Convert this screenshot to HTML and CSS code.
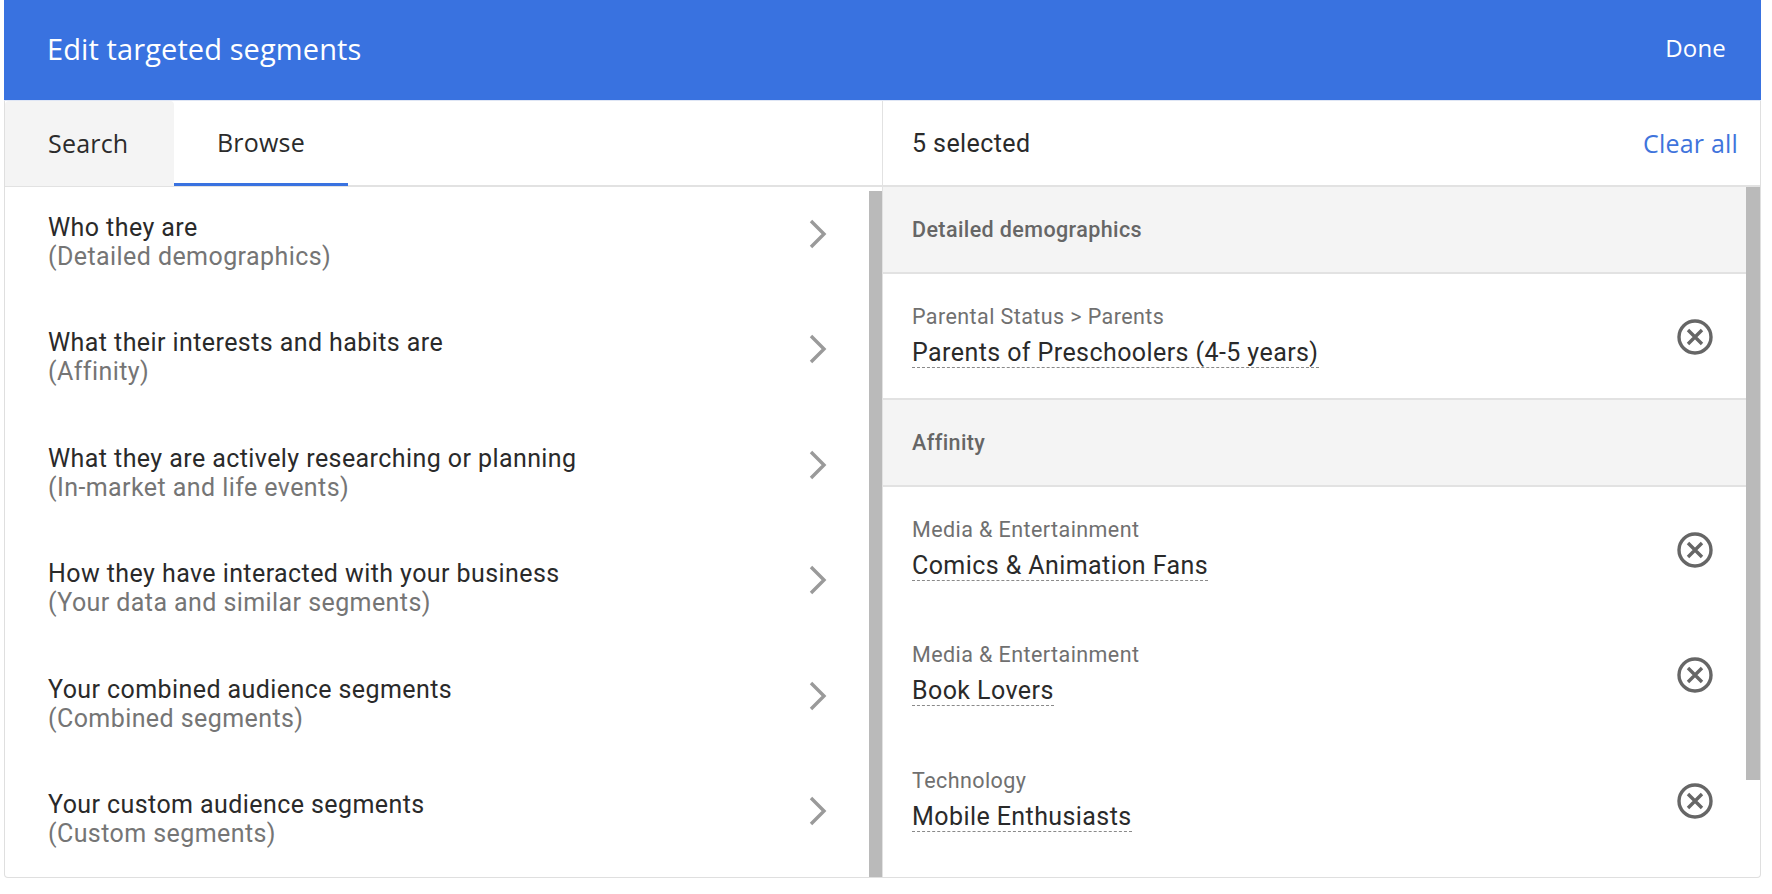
FILE: index.html
```html
<!DOCTYPE html>
<html lang="en">
<head>
<meta charset="utf-8">
<title>Edit targeted segments</title>
<link rel="stylesheet" href="styles.css">
</head>
<body>
<div class="dialog">
  <header class="topbar">
    <div class="title">Edit targeted segments</div>
    <div class="done">Done</div>
  </header>
  <div class="columns">
    <section class="left">
      <div class="tabs">
        <div class="tab tab-search">Search</div>
        <div class="tab tab-browse">Browse</div>
      </div>
      <div class="left-body">
        <ul class="menu">
          <li class="menu-row"><div class="menu-text"><div class="menu-title">Who they are</div><div class="menu-sub">(Detailed demographics)</div></div><svg class="chev" viewBox="0 0 18 30"><path d="M2 2l13 13L2 28"/></svg></li>
          <li class="menu-row"><div class="menu-text"><div class="menu-title">What their interests and habits are</div><div class="menu-sub">(Affinity)</div></div><svg class="chev" viewBox="0 0 18 30"><path d="M2 2l13 13L2 28"/></svg></li>
          <li class="menu-row"><div class="menu-text"><div class="menu-title">What they are actively researching or planning</div><div class="menu-sub">(In-market and life events)</div></div><svg class="chev" viewBox="0 0 18 30"><path d="M2 2l13 13L2 28"/></svg></li>
          <li class="menu-row"><div class="menu-text"><div class="menu-title">How they have interacted with your business</div><div class="menu-sub">(Your data and similar segments)</div></div><svg class="chev" viewBox="0 0 18 30"><path d="M2 2l13 13L2 28"/></svg></li>
          <li class="menu-row"><div class="menu-text"><div class="menu-title">Your combined audience segments</div><div class="menu-sub">(Combined segments)</div></div><svg class="chev" viewBox="0 0 18 30"><path d="M2 2l13 13L2 28"/></svg></li>
          <li class="menu-row"><div class="menu-text"><div class="menu-title">Your custom audience segments</div><div class="menu-sub">(Custom segments)</div></div><svg class="chev" viewBox="0 0 18 30"><path d="M2 2l13 13L2 28"/></svg></li>
        </ul>
        <div class="scroll-left"></div>
      </div>
    </section>
    <section class="right">
      <div class="sel-head">
        <div class="sel-count">5 selected</div>
        <div class="clear">Clear all</div>
      </div>
      <div class="right-body">
        <div class="group">Detailed demographics</div>
        <div class="item item-first">
          <div class="item-text"><div class="cat">Parental Status &gt; Parents</div><div class="name"><span>Parents of Preschoolers (4-5 years)</span></div></div>
          <svg class="remove" viewBox="0 0 36 36"><circle cx="18" cy="18" r="16"/><path d="M11 11l14 14M25 11L11 25"/></svg>
        </div>
        <div class="group">Affinity</div>
        <div class="item">
          <div class="item-text"><div class="cat">Media &amp; Entertainment</div><div class="name"><span>Comics &amp; Animation Fans</span></div></div>
          <svg class="remove" viewBox="0 0 36 36"><circle cx="18" cy="18" r="16"/><path d="M11 11l14 14M25 11L11 25"/></svg>
        </div>
        <div class="item">
          <div class="item-text"><div class="cat">Media &amp; Entertainment</div><div class="name"><span>Book Lovers</span></div></div>
          <svg class="remove" viewBox="0 0 36 36"><circle cx="18" cy="18" r="16"/><path d="M11 11l14 14M25 11L11 25"/></svg>
        </div>
        <div class="item">
          <div class="item-text"><div class="cat">Technology</div><div class="name"><span>Mobile Enthusiasts</span></div></div>
          <svg class="remove" viewBox="0 0 36 36"><circle cx="18" cy="18" r="16"/><path d="M11 11l14 14M25 11L11 25"/></svg>
        </div>
        <div class="scroll-right"></div>
      </div>
    </section>
  </div>
</div>
</body>
</html>
```
FILE: styles.css
```css
* { box-sizing: border-box; }
html, body { margin: 0; padding: 0; background: #fff; }
body { font-family: Roboto, "Liberation Sans", sans-serif; color: #202124; }
.dialog { width: 1757px; height: 878px; margin-left: 4px; border: 1px solid #dfdfdf; border-top: 0; border-radius: 0 0 4px 4px; display: flex; flex-direction: column; }
.topbar { height: 101px; margin: 0 -1px; background: #3972e0; border-bottom: 1px solid #dfe6f5; display: flex; align-items: center; justify-content: space-between; padding: 0 35px 4px 43px; color: #fff; font-family: "Open Sans", sans-serif; font-weight: 500; }
.title { font-size: 29px; letter-spacing: 0.1px; }
.done { font-size: 24px; letter-spacing: 0.2px; padding-bottom: 1px; }
.columns { flex: 1; display: flex; min-height: 0; }
.left { width: 878px; flex: none; border-right: 1px solid #e2e2e2; display: flex; flex-direction: column; }
.tabs { height: 86px; flex: none; display: flex; border-bottom: 2px solid #e2e2e2; font-family: "Open Sans", sans-serif; font-weight: 500; font-size: 25px; letter-spacing: 0.2px; }
.tab { height: 85px; display: flex; align-items: center; color: #2b2b2b; padding-bottom: 2px; }
.tab-search { width: 169px; padding-left: 43px; background: #f4f4f4; border-radius: 4px 4px 0 0; }
.tab-browse { width: 174px; padding-left: 43px; padding-bottom: 0; border-bottom: 3px solid #3972e0; }
.left-body { flex: 1; display: flex; min-height: 0; }
.menu { list-style: none; margin: 0; padding: 0; flex: 1; }
.menu-row { height: 115.5px; display: flex; align-items: flex-start; justify-content: space-between; padding: 25.5px 42px 0 43px; }
.menu-title { font-size: 25px; line-height: 29px; letter-spacing: 0.42px; color: #2a2a2a; }
.menu-sub { font-size: 25px; line-height: 29px; letter-spacing: 0.42px; color: #757575; }
.chev { width: 18px; height: 30px; margin-top: 6px; fill: none; stroke: #9a9a9a; stroke-width: 3.4; }
.scroll-left { width: 13px; flex: none; margin-top: 4px; background: #bababa; }
.right { flex: 1; display: flex; flex-direction: column; min-width: 0; }
.sel-head { height: 86px; flex: none; display: flex; align-items: center; justify-content: space-between; border-bottom: 2px solid #e2e2e2; padding: 1px 22px 0 29px; font-size: 25px; letter-spacing: 0.42px; color: #2a2a2a; }
.clear { font-family: "Open Sans", sans-serif; font-size: 25px; font-weight: 500; letter-spacing: 0.2px; color: #3f74dc; padding-bottom: 2px; }
.right-body { position: relative; flex: 1; min-height: 0; }
.group { height: 87px; background: #f4f4f4; border-bottom: 2px solid #e2e2e2; display: flex; align-items: center; padding: 0 0 0 29px; font-size: 21.5px; font-weight: 500; letter-spacing: 0.4px; color: #666; }
.item { height: 125.5px; display: flex; align-items: flex-start; justify-content: space-between; padding: 29px 47px 0 29px; }
.item-first { border-bottom: 2px solid #e2e2e2; }
.cat { font-size: 21.5px; line-height: 28px; letter-spacing: 0.42px; color: #707070; }
.name { font-size: 25px; line-height: 28px; margin-top: 8px; letter-spacing: 0.42px; color: #2a2a2a; }
.name span { display: inline-block; border-bottom: 1px dashed #8a8a8a; }
.remove { width: 36px; height: 36px; margin-top: 16px; fill: none; stroke: #666; stroke-width: 3.4; }
.scroll-right { position: absolute; top: 0; right: 0; width: 14px; height: 593px; background: #bababa; }
```
